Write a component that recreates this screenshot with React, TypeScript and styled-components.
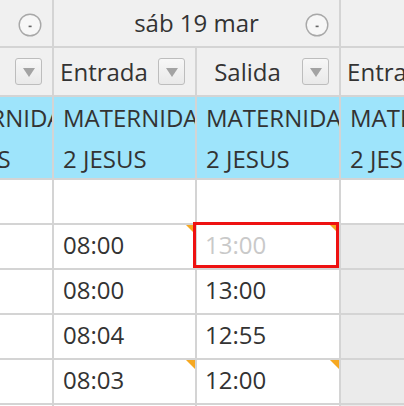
import React from 'react'
import styled, { createGlobalStyle } from 'styled-components'

const GlobalStyle = createGlobalStyle`
  html, body {
    margin: 0;
    padding: 0;
    background: #ffffff;
  }
  body {
    font-family: "Open Sans", "Liberation Sans", sans-serif;
    color: #333333;
    overflow: hidden;
  }
`

const Sheet = styled.div`
  width: 404px;
  height: 406px;
  overflow: hidden;
`

const Grid = styled.div`
  display: grid;
  grid-template-columns: 52px 141px 142px 141px;
  grid-template-rows: 46px 47px 81px 43px repeat(5, 43px);
  gap: 2px;
  background: #d4d4d4;
  font-size: 24px;
`

const Cell = styled.div<{ $bg?: string; $span?: number; $open?: boolean }>`
  position: relative;
  overflow: ${p => (p.$open ? 'visible' : 'hidden')};
  background: ${p => p.$bg || '#ffffff'};
  grid-column: ${p => (p.$span ? `span ${p.$span}` : 'auto')};
  min-width: 0;
`

// content of a column that is scrolled partly out of view
const Shifted = styled.div<{ $shift: number }>`
  width: 141px;
  height: 100%;
  margin-left: ${p => -p.$shift}px;
`

const DayHead = styled.div`
  display: flex;
  align-items: center;
  justify-content: flex-end;
  height: 100%;
  padding-right: 10px;
  box-sizing: border-box;
  position: relative;
`

const DayLabel = styled.span`
  position: absolute;
  left: 0;
  right: 0;
  text-align: center;
  line-height: 46px;
  white-space: nowrap;
`

const CircleBtn = styled.span`
  position: relative;
  width: 24px;
  height: 24px;
  display: inline-flex;
  margin-top: 4px;
`

const ColHead = styled.div`
  display: flex;
  align-items: center;
  height: 100%;
  padding-right: 10px;
  box-sizing: border-box;
`

const ColLabel = styled.span`
  flex: 1;
  text-align: center;
  line-height: 47px;
  white-space: nowrap;
  overflow: hidden;
`

const DropBtn = styled.span`
  width: 25px;
  height: 25px;
  border: 1px solid #bdbdbd;
  border-radius: 3px;
  background: linear-gradient(#f7f7f7, #e9e9e9);
  display: flex;
  align-items: center;
  justify-content: center;
  margin-left: 4px;
  flex: none;
`

const Arrow = styled.span`
  width: 0;
  height: 0;
  border-left: 6px solid transparent;
  border-right: 6px solid transparent;
  border-top: 9px solid #a3a3a3;
  margin-top: 1px;
`

const Place = styled.div`
  padding: 0 9px;
  line-height: 41px;
  white-space: normal;
  word-break: keep-all;
  overflow: hidden;
  height: 100%;
  box-sizing: border-box;
`

const Time = styled.div<{ $muted?: boolean; $pad?: number }>`
  padding-left: ${p => p.$pad ?? 9}px;
  line-height: 40px;
  color: ${p => (p.$muted ? '#c9c9c9' : '#333333')};
  white-space: nowrap;
`

const Flag = styled.span`
  position: absolute;
  top: 0;
  right: 0;
  width: 0;
  height: 0;
  border-top: 9px solid #f6a821;
  border-left: 9px solid transparent;
`

const Selected = styled.span`
  position: absolute;
  top: -3px;
  left: -4px;
  right: 0;
  bottom: 0;
  border: 3px solid #ee1111;
  pointer-events: none;
`

const Collapse = () => (
  <CircleBtn>
    <svg width="24" height="24" viewBox="0 0 24 24">
      <circle cx="12" cy="12" r="10.8" fill="#f7f7f7" stroke="#a8a8a8" strokeWidth="1.4" />
      <rect x="10.6" y="12.6" width="3" height="1.6" fill="#666666" />
    </svg>
  </CircleBtn>
)

const Dropdown = () => (
  <DropBtn>
    <Arrow />
  </DropBtn>
)

const BLUE = '#9ee4fb'
const HEAD = '#f0f0f0'
const LOCKED = '#ebebeb'

type Row = { entry: string; exit: string; flagIn?: boolean; flagOut?: boolean; muted?: boolean; selected?: boolean }

const rows: Row[] = [
  { entry: '08:00', exit: '13:00', flagIn: true, flagOut: true, muted: true, selected: true },
  { entry: '08:00', exit: '13:00' },
  { entry: '08:04', exit: '12:55' },
  { entry: '08:03', exit: '12:00', flagIn: true, flagOut: true },
  { entry: '', exit: '' },
]

export default function App() {
  return (
    <Sheet>
      <GlobalStyle />
      <Grid>
        {/* day header */}
        <Cell $bg={HEAD}>
          <DayHead>
            <Collapse />
          </DayHead>
        </Cell>
        <Cell $bg={HEAD} $span={2}>
          <DayHead>
            <DayLabel>sáb 19 mar</DayLabel>
            <Collapse />
          </DayHead>
        </Cell>
        <Cell $bg={HEAD} />

        {/* column headers */}
        <Cell $bg={HEAD}>
          <Shifted $shift={89}>
            <ColHead>
              <ColLabel>Salida</ColLabel>
              <Dropdown />
            </ColHead>
          </Shifted>
        </Cell>
        <Cell $bg={HEAD}>
          <ColHead>
            <ColLabel>Entrada</ColLabel>
            <Dropdown />
          </ColHead>
        </Cell>
        <Cell $bg={HEAD}>
          <ColHead>
            <ColLabel>Salida</ColLabel>
            <Dropdown />
          </ColHead>
        </Cell>
        <Cell $bg={HEAD}>
          <ColHead>
            <ColLabel>Entrada</ColLabel>
            <Dropdown />
          </ColHead>
        </Cell>

        {/* place row */}
        <Cell $bg={BLUE}>
          <Shifted $shift={82}>
            <Place>MATERNIDAD 2 JESUS</Place>
          </Shifted>
        </Cell>
        <Cell $bg={BLUE}>
          <Place>MATERNIDAD 2 JESUS</Place>
        </Cell>
        <Cell $bg={BLUE}>
          <Place>MATERNIDAD 2 JESUS</Place>
        </Cell>
        <Cell $bg={BLUE}>
          <Place>MATERNIDAD 2 JESUS</Place>
        </Cell>

        {/* blank row */}
        <Cell />
        <Cell />
        <Cell />
        <Cell />

        {rows.map((r, i) => (
          <React.Fragment key={i}>
            <Cell />
            <Cell>
              <Time>{r.entry}</Time>
              {r.flagIn && <Flag />}
            </Cell>
            <Cell $open={r.selected}>
              <Time $muted={r.muted} $pad={8}>{r.exit}</Time>
              {r.flagOut && <Flag />}
              {r.selected && <Selected />}
            </Cell>
            <Cell $bg={LOCKED} />
          </React.Fragment>
        ))}
      </Grid>
    </Sheet>
  )
}
